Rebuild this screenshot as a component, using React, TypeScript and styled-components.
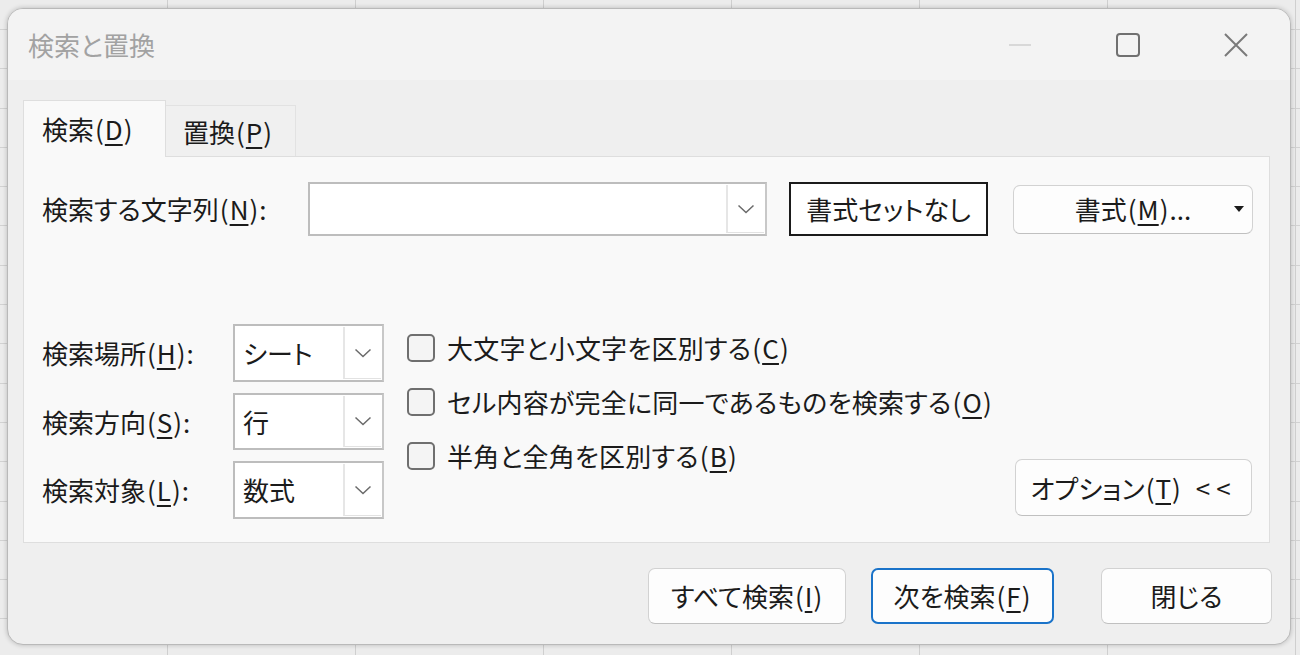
import React from "react";
import styled, { createGlobalStyle, css } from "styled-components";

const Global = createGlobalStyle`
  html, body { margin: 0; padding: 0; }
  body {
    font-family: "Noto Sans CJK JP", "Noto Sans", sans-serif;
    font-feature-settings: "palt" 1;
    color: #1b1b1b;
    -webkit-font-smoothing: antialiased;
  }
  * { box-sizing: border-box; }
`;

const FS = 26;

const Page = styled.div`
  width: 1300px;
  height: 655px;
  overflow: hidden;
  padding: 8px 9px 10px 7px;
  background-color: #ececec;
  background-image:
    repeating-linear-gradient(to right, transparent 0 167px, #cfcfcf 167px 168px, transparent 168px 188px),
    repeating-linear-gradient(to bottom, transparent 0 29px, #d2d2d2 29px 30px, transparent 30px 39.3px);
`;

const Dialog = styled.div`
  width: 1284px;
  height: 637px;
  display: flex;
  flex-direction: column;
  background: #efefef;
  border: 1px solid #b9b9b9;
  border-radius: 16px;
  box-shadow: 0 0 5px rgba(0, 0, 0, 0.22);
  overflow: hidden;
`;

const TitleBar = styled.div`
  height: 71px;
  flex: none;
  display: flex;
  align-items: center;
  background: #f3f3f3;
  padding-left: 20px;
`;

const Title = styled.div`
  font-size: ${FS}px;
  color: #a2a2a2;
  flex: 1;
  line-height: 1;
  margin-top: 1px;
`;

const Controls = styled.div`
  display: flex;
  align-items: center;
  height: 100%;
`;

const Ctl = styled.div`
  width: 108px;
  height: 100%;
  display: flex;
  align-items: center;
  justify-content: center;
`;

const Body = styled.div`
  flex: 1;
  display: flex;
  flex-direction: column;
  padding: 20px 20px 21px 15px;
`;

const TabStrip = styled.div`
  display: flex;
  align-items: flex-end;
  height: 56px;
  position: relative;
  z-index: 1;
`;

const Tab = styled.div<{ $active?: boolean }>`
  display: flex;
  align-items: center;
  font-size: ${FS}px;
  line-height: 1;
  white-space: nowrap;
  ${(p) =>
    p.$active
      ? css`
          height: 57px;
          width: 143px;
          padding-left: 18px;
          background: #f9f9f9;
          border: 1px solid #dedede;
          border-bottom: none;
          margin-bottom: -1px;
        `
      : css`
          height: 51px;
          width: 130px;
          padding-left: 17px;
          padding-top: 2px;
          background: #f0f0f0;
          border: 1px solid #e2e2e2;
          border-left: none;
          border-bottom: none;
        `}
`;

const Panel = styled.div`
  height: 387px;
  background: #f9f9f9;
  border: 1px solid #dedede;
  padding: 25px 17px 23px 18px;
  display: flex;
  flex-direction: column;
  justify-content: space-between;
`;

const Row = styled.div`
  display: flex;
  align-items: center;
`;

const Label = styled.div<{ $w: number }>`
  width: ${(p) => p.$w}px;
  flex: none;
  font-size: ${FS}px;
  line-height: 1;
  white-space: nowrap;
`;

const U = styled.span`
  text-decoration: underline;
  text-underline-offset: 4px;
  text-decoration-thickness: 1.5px;
`;

const Paren = styled.span`
  margin: 0 1px;
`;

const Combo = styled.div<{ $w: number; $h: number }>`
  width: ${(p) => p.$w}px;
  height: ${(p) => p.$h}px;
  flex: none;
  display: flex;
  background: #fff;
  border: 2px solid #bdbdbd;
  border-right-color: #c8c8c8;
`;

const ComboText = styled.div`
  flex: 1;
  display: flex;
  align-items: center;
  padding-left: 8px;
  font-size: ${FS}px;
  line-height: 1;
`;

const ComboBtn = styled.div`
  width: 38px;
  flex: none;
  display: flex;
  align-items: center;
  justify-content: center;
  border-left: 2px solid #e6e6e6;
  border-bottom: 1px solid #e2e2e2;
  margin: 1px 1px 1px 0;
`;

const Button = styled.div<{ $w: number; $h?: number; $variant?: "plain" | "default" | "boxed" }>`
  width: ${(p) => p.$w}px;
  height: ${(p) => p.$h ?? 56}px;
  flex: none;
  display: flex;
  align-items: center;
  justify-content: center;
  font-size: ${FS}px;
  line-height: 1;
  background: #fdfdfd;
  border-radius: 7px;
  border: 1px solid #d2d2d2;
  border-bottom-color: #c0c0c0;
  position: relative;
  white-space: nowrap;
  ${(p) =>
    p.$variant === "default" &&
    css`
      border: 2px solid #1a73c9;
    `}
  ${(p) =>
    p.$variant === "boxed" &&
    css`
      border-radius: 0;
      border: 2px solid #1b1b1b;
      background: #ffffff;
    `}
`;

const Caret = styled.span`
  position: absolute;
  right: 8px;
  top: 50%;
  transform: translateY(-50%);
  width: 0;
  height: 0;
  border-left: 5px solid transparent;
  border-right: 5px solid transparent;
  border-top: 6px solid #1b1b1b;
`;

const Lower = styled.div`
  display: flex;
  align-items: flex-end;
`;

const SelectCol = styled.div`
  display: flex;
  flex-direction: column;
  gap: 11px;
`;

const CheckCol = styled.div`
  display: flex;
  flex-direction: column;
  gap: 25px;
  align-self: flex-start;
  margin-left: 23px;
  margin-top: 9px;
  flex: 1;
`;

const CheckRow = styled.div`
  display: flex;
  align-items: center;
  gap: 12px;
  height: 29px;
`;

const Box = styled.div`
  width: 28px;
  height: 28px;
  flex: none;
  border: 2px solid #6f6f6f;
  border-radius: 5px;
  background: #f4f4f4;
`;

const CheckText = styled.div`
  font-size: ${FS}px;
  line-height: 1;
  white-space: nowrap;
  letter-spacing: 0.2px;
`;

const OptionsWrap = styled.div`
  margin-bottom: 3px;
`;

const Arrows = styled.span`
  margin-left: 14px;
  letter-spacing: 6px;
`;

const Footer = styled.div`
  display: flex;
  justify-content: flex-end;
  align-items: center;
  margin-top: 25px;
  margin-right: -2px;
  gap: 25px;
`;

const Chevron = () => (
  <svg width="18" height="10" viewBox="0 0 18 10">
    <polyline points="1.5,1.5 9,8.5 16.5,1.5" fill="none" stroke="#6a6a6a" strokeWidth="1.5" />
  </svg>
);

const Mn = ({ c }: { c: string }) => (
  <>
    <Paren>(</Paren>
    <U>{c}</U>
    <Paren>)</Paren>
  </>
);

export default function App() {
  return (
    <>
      <Global />
      <Page>
        <Dialog>
          <TitleBar>
            <Title>検索と置換</Title>
            <Controls>
              <Ctl>
                <svg width="24" height="4" viewBox="0 0 24 4">
                  <line x1="1" y1="2" x2="23" y2="2" stroke="#cfcfcf" strokeWidth="1.5" />
                </svg>
              </Ctl>
              <Ctl>
                <svg width="26" height="26" viewBox="0 0 26 26">
                  <rect x="2" y="2" width="22" height="22" rx="3" fill="none" stroke="#707070" strokeWidth="2" />
                </svg>
              </Ctl>
              <Ctl>
                <svg width="26" height="26" viewBox="0 0 26 26">
                  <path d="M2 2 L24 24 M24 2 L2 24" fill="none" stroke="#7a7a7a" strokeWidth="2" />
                </svg>
              </Ctl>
            </Controls>
          </TitleBar>
          <Body>
            <TabStrip>
              <Tab $active>
                検索<Mn c="D" />
              </Tab>
              <Tab>
                置換<Mn c="P" />
              </Tab>
            </TabStrip>
            <Panel>
              <Row>
                <Label $w={266}>
                  検索する文字列<Mn c="N" />:
                </Label>
                <Combo $w={459} $h={54}>
                  <ComboText />
                  <ComboBtn>
                    <Chevron />
                  </ComboBtn>
                </Combo>
                <Button $w={199} $h={54} $variant="boxed" style={{ marginLeft: 22 }}>
                  書式セットなし
                </Button>
                <Button $w={240} $h={49} style={{ marginLeft: 25 }}>
                  書式<Mn c="M" />...
                  <Caret />
                </Button>
              </Row>
              <Lower>
                <SelectCol>
                  <Row>
                    <Label $w={191}>
                      検索場所<Mn c="H" />:
                    </Label>
                    <Combo $w={151} $h={58}>
                      <ComboText>シート</ComboText>
                      <ComboBtn>
                        <Chevron />
                      </ComboBtn>
                    </Combo>
                  </Row>
                  <Row>
                    <Label $w={191}>
                      検索方向<Mn c="S" />:
                    </Label>
                    <Combo $w={151} $h={57}>
                      <ComboText>行</ComboText>
                      <ComboBtn>
                        <Chevron />
                      </ComboBtn>
                    </Combo>
                  </Row>
                  <Row>
                    <Label $w={191}>
                      検索対象<Mn c="L" />:
                    </Label>
                    <Combo $w={151} $h={58}>
                      <ComboText>数式</ComboText>
                      <ComboBtn>
                        <Chevron />
                      </ComboBtn>
                    </Combo>
                  </Row>
                </SelectCol>
                <CheckCol>
                  <CheckRow>
                    <Box />
                    <CheckText>
                      大文字と小文字を区別する<Mn c="C" />
                    </CheckText>
                  </CheckRow>
                  <CheckRow>
                    <Box />
                    <CheckText>
                      セル内容が完全に同一であるものを検索する<Mn c="O" />
                    </CheckText>
                  </CheckRow>
                  <CheckRow>
                    <Box />
                    <CheckText>
                      半角と全角を区別する<Mn c="B" />
                    </CheckText>
                  </CheckRow>
                </CheckCol>
                <OptionsWrap>
                  <Button $w={237} $h={57}>
                    オプション<Mn c="T" />
                    <Arrows>&lt;&lt;</Arrows>
                  </Button>
                </OptionsWrap>
              </Lower>
            </Panel>
            <Footer>
              <Button $w={198}>
                すべて検索<Mn c="I" />
              </Button>
              <Button $w={183} $variant="default">
                次を検索<Mn c="F" />
              </Button>
              <Button $w={171} style={{ marginLeft: 22 }}>
                閉じる
              </Button>
            </Footer>
          </Body>
        </Dialog>
      </Page>
    </>
  );
}
